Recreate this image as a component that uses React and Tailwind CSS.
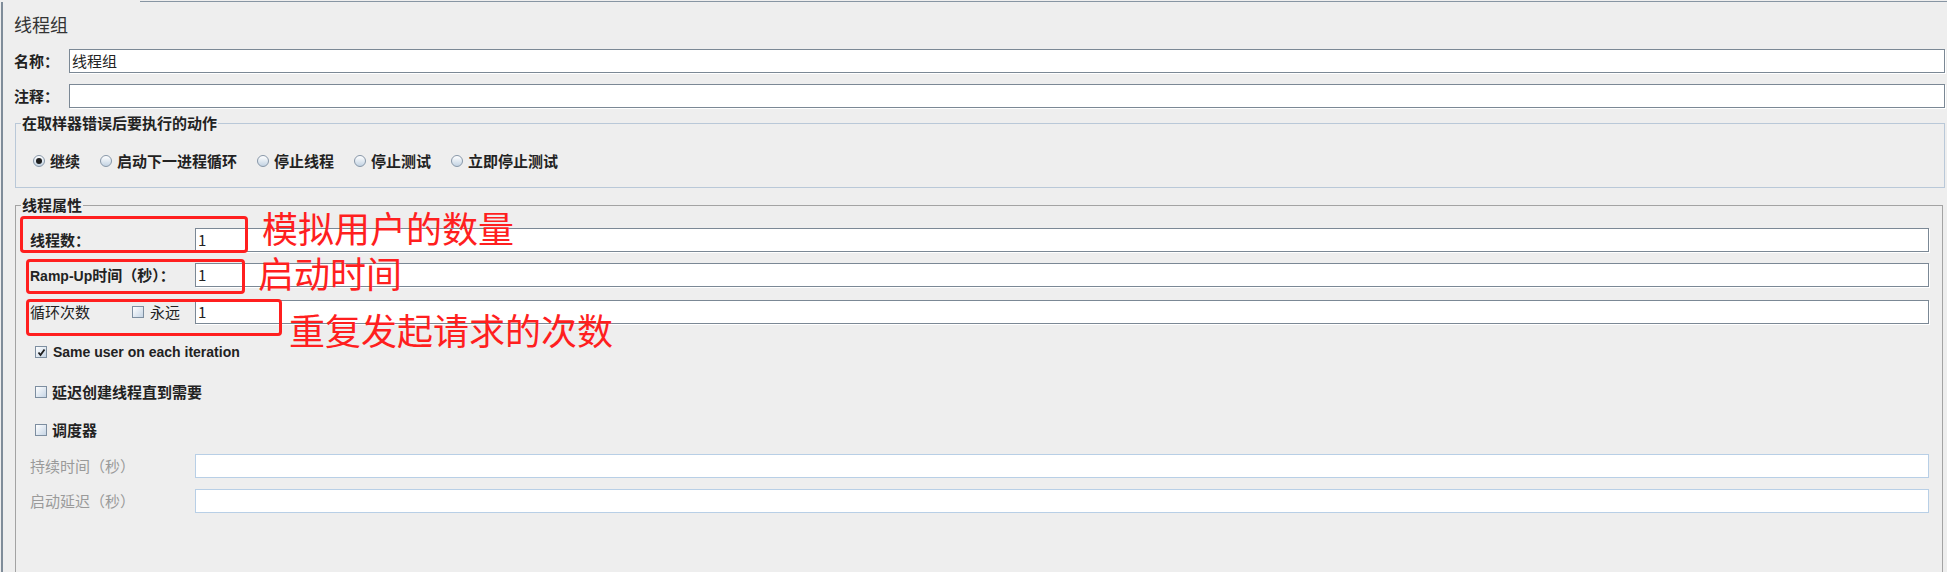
import React from 'react';

const cjk = { fontFamily: '"Noto Sans CJK SC", "Liberation Sans", sans-serif' };
const latin = { fontFamily: '"Liberation Sans", "Noto Sans CJK SC", sans-serif' };

const actions = [
  { label: '继续', checked: true },
  { label: '启动下一进程循环' },
  { label: '停止线程' },
  { label: '停止测试' },
  { label: '立即停止测试' },
];

function Radio({ label, checked }) {
  return (
    <label className="flex items-center gap-[5px]">
      <span className="w-[12px] h-[12px] rounded-full border border-[#8797a8] bg-linear-to-b from-white to-[#c3d3e3] flex items-center justify-center">
        {checked && <span className="w-[6px] h-[6px] rounded-full bg-[#1e1e1e]" />}
      </span>
      <span className="font-bold">{label}</span>
    </label>
  );
}

function Checkbox({ checked }) {
  return (
    <span className="w-[12px] h-[12px] shrink-0 border border-[#7d8ea0] bg-linear-to-br from-white to-[#c6d5e5] flex items-center justify-center">
      {checked && (
        <svg width="9" height="9" viewBox="0 0 9 9">
          <path d="M1.5 4.5 L3.5 7 L7.5 1.5" fill="none" stroke="#1e1e1e" strokeWidth="1.8" />
        </svg>
      )}
    </span>
  );
}

function TextField({ value, disabled }) {
  return (
    <div
      className={`flex-1 h-[24px] bg-white flex items-center pl-[2px] text-[15px] text-[#222] ${
        disabled ? 'border border-[#b8cfe6]' : 'border border-[#7b8895] shadow-[1px_1px_0_#ffffff]'
      }`}
    >
      {value}
    </div>
  );
}

function Note({ className, children }) {
  return (
    <div
      className={`absolute text-[36px] leading-[36px] text-[#ff1f1f] whitespace-nowrap ${className}`}
      style={cjk}
    >
      {children}
    </div>
  );
}

export default function App() {
  return (
    <div className="relative w-[1947px] h-[572px] overflow-hidden bg-[#eeeeee] text-[#222] text-[15px] leading-[20px]" style={cjk}>
      {/* top edge */}
      <div className="mt-px ml-[140px] h-px bg-[#8795a3]" />

      {/* main panel */}
      <div className="ml-px border-l-2 border-[#7f8c99] pl-[11px] pr-[2px] flex flex-col">
        <div className="mt-[10px] text-[18px] leading-[24px] text-[#333]">线程组</div>

        <div className="mt-[13px] flex items-center">
          <span className="w-[55px] font-bold">名称：</span>
          <TextField value="线程组" />
        </div>
        <div className="mt-[11px] flex items-center">
          <span className="w-[55px] font-bold">注释：</span>
          <TextField value="" />
        </div>

        {/* on sampler error */}
        <fieldset className="mt-[5px] ml-px border border-[#b9c8d8]">
          <legend className="ml-[5px] px-px font-bold">在取样器错误后要执行的动作</legend>
          <div className="pl-[17px] pt-[18px] pb-[16px] flex items-center gap-[20px]">
            {actions.map((a) => (
              <Radio key={a.label} label={a.label} checked={a.checked} />
            ))}
          </div>
        </fieldset>

        {/* thread properties */}
        <fieldset className="mt-[7px] ml-px mr-[2px] border border-[#a3a3a3]">
          <legend className="ml-[5px] px-px font-bold">线程属性</legend>

          <div className="pl-[14px] pr-[13px] pb-[80px] flex flex-col">
            <div className="mt-[13px] flex items-center">
              <span className="w-[165px] font-bold">线程数：</span>
              <TextField value="1" />
            </div>
            <div className="mt-[11px] flex items-center">
              <span className="w-[165px] font-bold whitespace-nowrap">
                <span className="text-[14px]" style={latin}>Ramp-Up</span>时间（秒）：
              </span>
              <TextField value="1" />
            </div>
            <div className="mt-[13px] flex items-center">
              <span className="w-[102px]">循环次数</span>
              <span className="w-[63px] flex items-center gap-[6px]">
                <Checkbox />
                <span>永远</span>
              </span>
              <TextField value="1" />
            </div>

            <div className="mt-[18px] ml-[5px] flex items-center gap-[6px]">
              <Checkbox checked />
              <span className="text-[14px] font-bold" style={latin}>Same user on each iteration</span>
            </div>
            <div className="mt-[20px] ml-[5px] flex items-center gap-[5px]">
              <Checkbox />
              <span className="font-bold">延迟创建线程直到需要</span>
            </div>
            <div className="mt-[18px] ml-[5px] flex items-center gap-[5px]">
              <Checkbox />
              <span className="font-bold">调度器</span>
            </div>

            <div className="mt-[14px] flex items-center">
              <span className="w-[165px] text-[#9a9a9a]">持续时间（秒）</span>
              <TextField value="" disabled />
            </div>
            <div className="mt-[11px] flex items-center">
              <span className="w-[165px] text-[#9a9a9a]">启动延迟（秒）</span>
              <TextField value="" disabled />
            </div>
          </div>
        </fieldset>
      </div>

      {/* red annotations */}
      <div className="absolute left-[20px] top-[216px] w-[228px] h-[37px] border-[3px] border-[#ff1f1f] rounded-[4px]" />
      <div className="absolute left-[26px] top-[259px] w-[219px] h-[35px] border-[3px] border-[#ff1f1f] rounded-[4px]" />
      <div className="absolute left-[26px] top-[299px] w-[256px] h-[37px] border-[3px] border-[#ff1f1f] rounded-[4px]" />
      <Note className="left-[262px] top-[209px]">模拟用户的数量</Note>
      <Note className="left-[258px] top-[254px]">启动时间</Note>
      <Note className="left-[289px] top-[311px]">重复发起请求的次数</Note>
    </div>
  );
}
